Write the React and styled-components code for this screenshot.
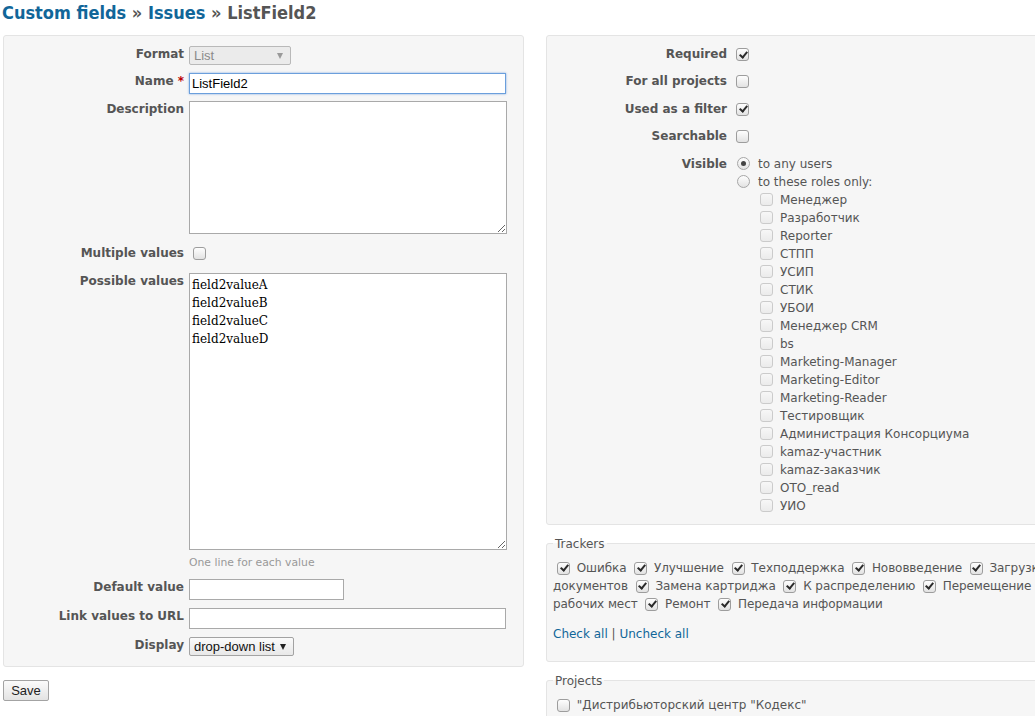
import React from "react";
import styled, { createGlobalStyle } from "styled-components";

const GlobalStyle = createGlobalStyle`
  html, body { margin: 0; padding: 0; background: #fff; overflow: hidden; }
  body {
    font-family: "DejaVu Sans", Verdana, sans-serif;
    font-size: 12px;
    color: #333;
  }
`;

const Page = styled.div`
  width: 1064px;
  padding-left: 3px;
`;

const Title = styled.h2`
  margin: 0 0 9px -1px;
  font-family: "DejaVu Sans Condensed", "DejaVu Sans", sans-serif;
  font-stretch: condensed;
  font-size: 18px;
  font-weight: bold;
  line-height: 26px;
  color: #555;
  a { color: #169; text-decoration: none; }
`;

const Split = styled.div`
  display: grid;
  grid-template-columns: 521px 521px;
  column-gap: 22px;
  align-items: start;
`;

const Column = styled.div`
  display: flex;
  flex-direction: column;
  align-items: stretch;
`;

const Box = styled.div`
  background: #f6f6f6;
  border: 1px solid #e4e4e4;
  border-radius: 3px;
  padding: 6px 0;
`;

const Row = styled.div`
  display: grid;
  grid-template-columns: 180px 1fr;
  column-gap: 5px;
  padding: 3px 0;
  margin-bottom: ${(p) => p.$after || 0}px;
  min-height: 21.4px;
`;

const Label = styled.label`
  text-align: right;
  font-weight: bold;
  color: #555;
  line-height: 18px;
`;

const Star = styled.span`
  color: #bb0000;
`;

const Field = styled.div`
  display: flex;
  flex-direction: column;
  align-items: flex-start;
`;

const TextInput = styled.input`
  box-sizing: border-box;
  width: ${(p) => p.$w}px;
  height: 21px;
  margin: 1px 0 0;
  padding: 1px 2px;
  border: 1px solid ${(p) => (p.$focus ? "#6b9fdc" : "#a9a9a9")};
  box-shadow: ${(p) => (p.$focus ? "0 0 2px rgba(80, 140, 220, 0.7)" : "none")};
  outline: none;
  background: #fff;
  color: #000;
  font: 13px "Liberation Sans", Arial, sans-serif;
`;

const TextArea = styled.textarea`
  box-sizing: border-box;
  width: 318px;
  height: ${(p) => p.$h}px;
  margin: 1px 0 4px;
  padding: 2px;
  border: 1px solid #a9a9a9;
  background: #fff;
  color: #000;
  font: 12px "DejaVu Serif", serif;
  line-height: 18px;
  outline: none;
`;

const SelectWrap = styled.span`
  position: relative;
  display: inline-block;
  margin-top: 1px;
`;

const Select = styled.select`
  appearance: none;
  -webkit-appearance: none;
  box-sizing: border-box;
  width: ${(p) => p.$w}px;
  height: 19px;
  margin: 0;
  padding: 0 0 0 4px;
  border: 1px solid ${(p) => (p.disabled ? "#b9b9b9" : "#a3a3a3")};
  border-radius: 2px;
  background: ${(p) => (p.disabled ? "#ebebeb" : "linear-gradient(#fbfbfb, #e8e8e8)")};
  color: ${(p) => (p.disabled ? "#8a8a8a" : "#111")};
  font: 13px "Liberation Sans", Arial, sans-serif;
  opacity: 1;
`;

const Arrow = styled.span`
  position: absolute;
  right: 8px;
  top: 7px;
  width: 0;
  height: 0;
  border-left: 3.5px solid transparent;
  border-right: 3.5px solid transparent;
  border-top: 6px solid ${(p) => (p.$muted ? "#999" : "#222")};
  pointer-events: none;
`;

const Hint = styled.em`
  display: block;
  font-style: normal;
  font-size: 10.8px;
  line-height: 18px;
  color: #999;
`;

const Check = styled.input.attrs({ type: "checkbox" })`
  appearance: none;
  -webkit-appearance: none;
  position: relative;
  box-sizing: border-box;
  width: 13px;
  height: 13px;
  margin: 3px 3px 3px 4px;
  border: 1px solid ${(p) => (p.disabled ? "#cbcbcb" : "#9d9d9d")};
  border-radius: 3px;
  background: ${(p) =>
    p.disabled ? "linear-gradient(#f7f7f7, #ebebeb)" : "linear-gradient(#fefefe, #e2e2e2)"};
  vertical-align: middle;
  flex: none;
  &:checked::after {
    content: "";
    position: absolute;
    left: 3.5px;
    top: 0.5px;
    width: 3px;
    height: 6px;
    border: solid #2b2b2b;
    border-width: 0 2px 2px 0;
    transform: rotate(40deg);
  }
`;

const Radio = styled.input.attrs({ type: "radio" })`
  appearance: none;
  -webkit-appearance: none;
  position: relative;
  box-sizing: border-box;
  width: 13px;
  height: 13px;
  margin: 0 8px 0 5px;
  border: 1px solid #a6a6a6;
  border-radius: 50%;
  background: linear-gradient(#fefefe, #e2e2e2);
  flex: none;
  &:checked::after {
    content: "";
    position: absolute;
    left: 3px;
    top: 3px;
    width: 5px;
    height: 5px;
    border-radius: 50%;
    background: #444;
  }
`;

const CheckField = styled.div`
  display: flex;
  align-items: flex-start;
`;

const OptionList = styled.div`
  display: flex;
  flex-direction: column;
`;

const Option = styled.label`
  display: flex;
  align-items: center;
  height: 18px;
  color: #555;
  padding-left: ${(p) => p.$indent || 0}px;
  ${Check} { margin: 0 7px 0 4px; }
`;

const Button = styled.button`
  align-self: flex-start;
  box-sizing: border-box;
  margin-top: 13px;
  height: 21px;
  width: 46px;
  padding: 0;
  border: 1px solid #a3a3a3;
  border-radius: 2px;
  background: linear-gradient(#fbfbfb, #e3e3e3);
  color: #222;
  font: 13px "Liberation Sans", Arial, sans-serif;
`;

const Fieldset = styled.fieldset`
  margin: 12px 0 0;
  padding: 8px 6px 6px;
  min-width: 0;
  border: 1px solid #e4e4e4;
  border-radius: 3px;
  background: #f6f6f6;
`;

const Legend = styled.legend`
  padding: 0 2px;
  line-height: 14px;
  color: #555;
`;

const Flow = styled.div`
  line-height: 18px;
  color: #555;
  letter-spacing: -0.08px;
  ${Check} { margin-top: 1px; margin-bottom: 1px; }
`;

const Links = styled.p`
  margin: 12px 0;
  line-height: 18px;
  color: #555;
  a { color: #169; text-decoration: none; }
`;

const ProjectList = styled.ul`
  list-style: none;
  margin: 0;
  padding: 0;
  line-height: 18px;
  color: #555;
  ${Check} { margin-top: 1px; margin-bottom: 1px; }
`;

const roles = [
  "Менеджер",
  "Разработчик",
  "Reporter",
  "СТПП",
  "УСИП",
  "СТИК",
  "УБОИ",
  "Менеджер CRM",
  "bs",
  "Marketing-Manager",
  "Marketing-Editor",
  "Marketing-Reader",
  "Тестировщик",
  "Администрация Консорциума",
  "kamaz-участник",
  "kamaz-заказчик",
  "ОТО_read",
  "УИО",
];

const trackers = [
  "Ошибка",
  "Улучшение",
  "Техподдержка",
  "Нововведение",
  "Загрузка документов",
  "Замена картриджа",
  "К распределению",
  "Перемещение рабочих мест",
  "Ремонт",
  "Передача информации",
];

const projects = [
  "\"Дистрибьюторский центр \"Кодекс\"",
  "1С Интеграция",
  "Архив",
];

const flags = [
  ["Required", true],
  ["For all projects", false],
  ["Used as a filter", true],
  ["Searchable", false],
];

export default function App() {
  return (
    <Page>
      <GlobalStyle />
      <Title>
        <a href="#">Custom fields</a> » <a href="#">Issues</a> » ListField2
      </Title>
      <Split>
        <Column>
          <Box>
            <Row>
              <Label>Format</Label>
              <Field>
                <SelectWrap>
                  <Select $w={102} disabled defaultValue="list">
                    <option value="list">List</option>
                  </Select>
                  <Arrow $muted />
                </SelectWrap>
              </Field>
            </Row>
            <Row>
              <Label>
                Name <Star>*</Star>
              </Label>
              <Field>
                <TextInput $w={317} $focus defaultValue="ListField2" />
              </Field>
            </Row>
            <Row>
              <Label>Description</Label>
              <Field>
                <TextArea $h={133} />
              </Field>
            </Row>
            <Row>
              <Label>Multiple values</Label>
              <CheckField>
                <Check />
              </CheckField>
            </Row>
            <Row>
              <Label>Possible values</Label>
              <Field>
                <TextArea
                  $h={277}
                  defaultValue={"field2valueA\nfield2valueB\nfield2valueC\nfield2valueD"}
                />
                <Hint>One line for each value</Hint>
              </Field>
            </Row>
            <Row $after={1}>
              <Label>Default value</Label>
              <Field>
                <TextInput $w={155} />
              </Field>
            </Row>
            <Row $after={1}>
              <Label>Link values to URL</Label>
              <Field>
                <TextInput $w={317} />
              </Field>
            </Row>
            <Row>
              <Label>Display</Label>
              <Field>
                <SelectWrap>
                  <Select $w={105} defaultValue="dd">
                    <option value="dd">drop-down list</option>
                    <option value="cb">check boxes</option>
                  </Select>
                  <Arrow />
                </SelectWrap>
              </Field>
            </Row>
          </Box>
          <Button>Save</Button>
        </Column>

        <Column>
          <Box>
            {flags.map(([name, on]) => (
              <Row key={name}>
                <Label>{name}</Label>
                <CheckField>
                  <Check defaultChecked={on} />
                </CheckField>
              </Row>
            ))}
            <Row>
              <Label>Visible</Label>
              <OptionList>
                <Option>
                  <Radio name="visible" defaultChecked />
                  to any users
                </Option>
                <Option>
                  <Radio name="visible" />
                  to these roles only:
                </Option>
                {roles.map((r) => (
                  <Option key={r} $indent={24}>
                    <Check disabled />
                    {r}
                  </Option>
                ))}
              </OptionList>
            </Row>
          </Box>

          <Fieldset>
            <Legend>Trackers</Legend>
            <Flow>
              {trackers.map((t) => (
                <React.Fragment key={t}>
                  <label>
                    <Check defaultChecked /> {t}
                  </label>{" "}
                </React.Fragment>
              ))}
            </Flow>
            <Links>
              <a href="#">Check all</a> | <a href="#">Uncheck all</a>
            </Links>
          </Fieldset>

          <Fieldset>
            <Legend>Projects</Legend>
            <ProjectList>
              {projects.map((p) => (
                <li key={p}>
                  <label>
                    <Check /> {p}
                  </label>
                </li>
              ))}
            </ProjectList>
          </Fieldset>
        </Column>
      </Split>
    </Page>
  );
}
